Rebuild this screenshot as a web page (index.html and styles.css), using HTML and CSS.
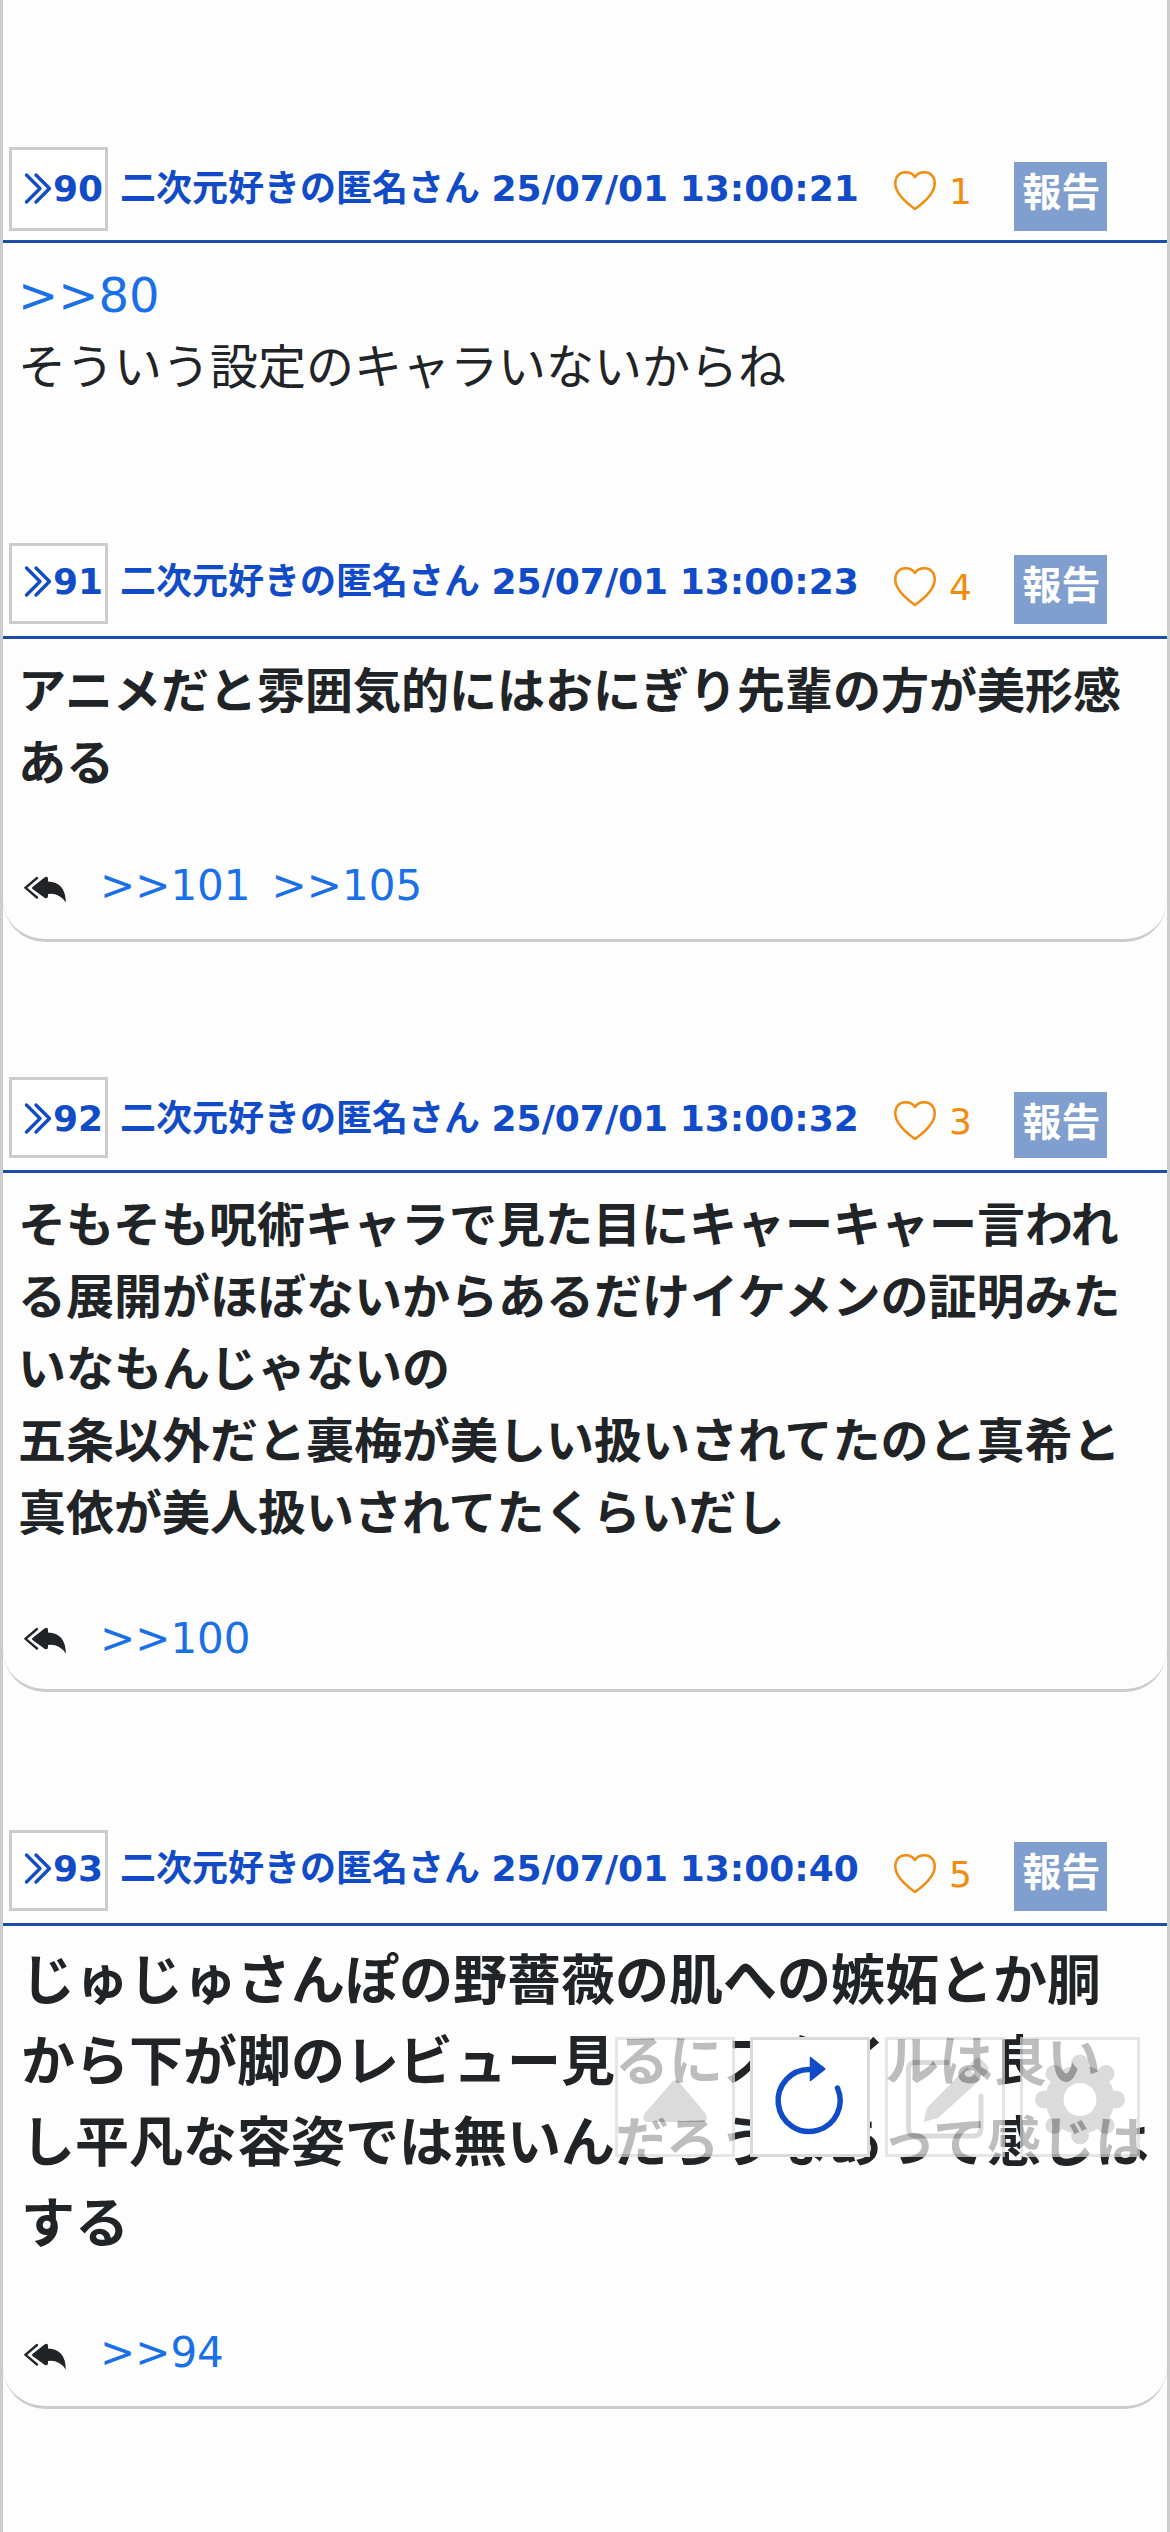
FILE: index.html
```html
<!DOCTYPE html>
<html lang="ja">
<head>
<meta charset="utf-8">
<title>スレッド</title>
<link rel="stylesheet" href="styles.css">
</head>
<body>
<svg class="defs" width="0" height="0" aria-hidden="true">
  <symbol id="chevrons" viewBox="0 0 28 36"><path d="M2.500 4L16 17.500L2.500 31M12 4L25.500 17.500L12 31" fill="none" stroke="currentColor" stroke-width="3.400" stroke-linecap="round" stroke-linejoin="round"/></symbol>
  <symbol id="heart" viewBox="0 0 42 40"><path d="M21 38C14 33 1.300 23 1.300 12.500C1.300 5 6 1.300 11.500 1.300C15.500 1.300 19 3 21 6C23 3 26.500 1.300 30.500 1.300C36 1.300 40.700 5 40.700 12.500C40.700 23 28 33 21 38Z" fill="none" stroke="currentColor" stroke-width="2.500" stroke-linejoin="round"/></symbol>
  <symbol id="reply" viewBox="0 0 44 28"><path d="M13 2L1.500 11.800L13 21.500" fill="none" stroke="currentColor" stroke-width="2.300" stroke-linecap="round"/><path d="M8.500 11Q7.500 12 8.500 13L20.500 21.800Q24 23.500 24 20V18Q35 16.500 41.800 26.500Q41.500 6 24 5.500V3Q24 -.500 20.500 1.500Z" fill="currentColor"/></symbol>
</svg>
<main class="thread">
  <article class="post post-first">
    <header class="head">
      <a class="num"><svg class="chev"><use href="#chevrons"/></svg>90</a>
      <span class="name">二次元好きの匿名さん 25/07/01 13:00:21</span>
      <span class="like"><svg class="heart"><use href="#heart"/></svg>1</span>
      <button class="report">報告</button>
    </header>
    <div class="body plain"><a class="link">&gt;&gt;80</a><br>そういう設定のキャラいないからね</div>
  </article>
  <article class="post">
    <header class="head tight">
      <a class="num"><svg class="chev"><use href="#chevrons"/></svg>91</a>
      <span class="name">二次元好きの匿名さん 25/07/01 13:00:23</span>
      <span class="like"><svg class="heart"><use href="#heart"/></svg>4</span>
      <button class="report">報告</button>
    </header>
    <div class="body">アニメだと雰囲気的にはおにぎり先輩の方が美形感<br>ある</div>
    <footer class="replies"><svg class="arrow"><use href="#reply"/></svg><a class="link">&gt;&gt;101</a><a class="link">&gt;&gt;105</a></footer>
  </article>
  <article class="post">
    <header class="head short">
      <a class="num"><svg class="chev"><use href="#chevrons"/></svg>92</a>
      <span class="name">二次元好きの匿名さん 25/07/01 13:00:32</span>
      <span class="like"><svg class="heart"><use href="#heart"/></svg>3</span>
      <button class="report">報告</button>
    </header>
    <div class="body">そもそも呪術キャラで見た目にキャーキャー言われ<br>る展開がほぼないからあるだけイケメンの証明みた<br>いなもんじゃないの<br>五条以外だと裏梅が美しい扱いされてたのと真希と<br>真依が美人扱いされてたくらいだし</div>
    <footer class="replies replies-low"><svg class="arrow"><use href="#reply"/></svg><a class="link">&gt;&gt;100</a></footer>
  </article>
  <article class="post post-last">
    <header class="head tight">
      <a class="num"><svg class="chev"><use href="#chevrons"/></svg>93</a>
      <span class="name">二次元好きの匿名さん 25/07/01 13:00:40</span>
      <span class="like"><svg class="heart"><use href="#heart"/></svg>5</span>
      <button class="report">報告</button>
    </header>
    <div class="body large">じゅじゅさんぽの野薔薇の肌への嫉妬とか胴<br>から下が脚のレビュー見るにスタイルは良い<br>し平凡な容姿では無いんだろうなあって感じは<br>する</div>
    <footer class="replies"><svg class="arrow"><use href="#reply"/></svg><a class="link">&gt;&gt;94</a></footer>
  </article>
</main>
<nav class="tools">
  <button class="tool faded"><svg viewBox="0 0 114 114"><path d="M54 42Q57.500 38 61 42L87 73Q92 82 83 82H31Q22 82 27 73Z" fill="#ccc"/></svg></button>
  <button class="tool"><svg viewBox="0 0 114 114"><path d="M57 29.500A31 31 0 1 0 84.500 48" fill="none" stroke="#114bc8" stroke-width="5.500" stroke-linecap="round"/><path d="M57.500 17.500L72 29L57.500 40.500Z" fill="#114bc8" stroke="#114bc8" stroke-width="1.500" stroke-linejoin="round"/></svg></button>
  <button class="tool faded"><svg viewBox="0 0 114 114"><path d="M59 22.500H27Q20.500 22.500 20.500 29V88Q20.500 96 28 96H86Q93 96 93 88V56" fill="none" stroke="#ccc" stroke-width="5" stroke-linecap="round"/><path d="M35.500 82L39 68L79 27L92 40L50 78ZM82 24L86 20Q90 16 94 20L99 25Q102 29 99 33L95 37Z" fill="#ccc"/></svg></button>
  <button class="tool faded"><svg viewBox="0 0 114 114"><g transform="translate(57 59.500)" fill="#ccc"><circle r="34.500"/><circle cx="36" r="9"/><circle cx="-36" r="9"/><circle cy="36" r="9"/><circle cy="-36" r="9"/><circle cx="26" cy="26" r="8.500"/><circle cx="-26" cy="26" r="8.500"/><circle cx="26" cy="-26" r="8.500"/><circle cx="-26" cy="-26" r="8.500"/><circle r="16.500" fill="#fff"/></g></svg></button>
</nav>
</body>
</html>
```
FILE: styles.css
```css
* { box-sizing: border-box; }
body { margin: 0; font-family: "DejaVu Sans", "Noto Sans CJK JP", sans-serif; color: #212427; background: #fdfdfd; }
.defs { position: absolute; }
.thread { height: 2532px; padding-top: 147px; border: solid #ccc; border-width: 0 3px; overflow: hidden; }
.post { margin-bottom: 135px; border-bottom: 3px solid #ccc; border-radius: 0 0 42px 42px; }
.post + .post-last { margin-top: 138px; }
.post-first { height: 396px; margin-bottom: 0; border: 0; }
.head { display: flex; align-items: flex-start; height: 96px; padding-left: 6px; border-bottom: 3px solid #1c4ea5; color: #114bc8; font-size: 36px; font-weight: 700; line-height: 54px; white-space: nowrap; }
.num { display: flex; flex: none; width: 99px; height: 84px; padding: 12px 0 0 12px; border: 3px solid #ccc; background: #fff; }
.chev { width: 28px; height: 36px; margin: 9px 1px 0 0; }
.name { width: 770px; padding: 15px 0 0 12px; word-spacing: -1px; }
.like { display: flex; width: 136px; padding: 18px 0 0 16px; color: #f28c0f; font-weight: 400; }
.heart { width: 42px; height: 40px; margin: 6px 13px 0 0; }
.report { width: 93px; height: 69px; margin: 15px 0 0; padding: 0 0 8px 2px; border: 0; background: #809fce; color: #fff; font: 700 39px/61px "DejaVu Sans", "Noto Sans CJK JP", sans-serif; }
.tight .num { height: 81px; padding-top: 9px; }
.tight .name { padding-top: 12px; }
.tight .report { margin-top: 12px; }
.short .num { height: 81px; }
.short .report { height: 66px; padding-bottom: 5px; }
.body { padding: 16px 0 0 15px; font-size: 48px; font-weight: 700; line-height: 72px; white-space: nowrap; }
.plain { font-weight: 400; }
.large { margin-bottom: 1px; padding: 15px 0 0 18px; font-size: 54px; line-height: 81px; }
.link { color: #1a70e8; }
.replies { display: flex; height: 140px; padding: 55px 0 0 20px; font-size: 42px; line-height: 63px; }
.replies-low { padding-top: 58px; }
.replies .link { margin-right: 21px; }
.arrow { width: 44px; height: 28px; margin: 22px 32px 0 1px; }
.replies-low .arrow { margin-top: 20px; }
.tools { position: fixed; left: 615px; top: 2037px; display: flex; gap: 15px; }
.tool { width: 120px; height: 120px; padding: 0; border: 3px solid #dadada; background: #fff; }
.tool svg { display: block; width: 114px; height: 114px; }
.faded { opacity: .7; }
```
